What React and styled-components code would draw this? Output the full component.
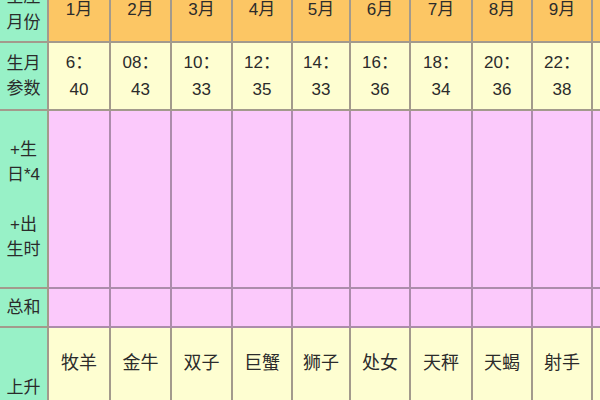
import React from 'react'
import styled, { createGlobalStyle } from 'styled-components'

const GlobalStyle = createGlobalStyle`
  html, body {
    margin: 0;
    padding: 0;
    width: 600px;
    height: 400px;
    overflow: hidden;
    background: #ffffff;
  }
`

const colors = {
  green: '#98f1c7',
  orange: '#fcc664',
  cream: '#fefed1',
  pink: '#fbc9fb',
  line: '#a39a8c',
  pinkLine: '#ac8cab',
}

const months = ['1月', '2月', '3月', '4月', '5月', '6月', '7月', '8月', '9月']
const params = [
  ['6：', '40'],
  ['08：', '43'],
  ['10：', '33'],
  ['12：', '35'],
  ['14：', '33'],
  ['16：', '36'],
  ['18：', '34'],
  ['20：', '36'],
  ['22：', '38'],
]
const signs = ['牧羊', '金牛', '双子', '巨蟹', '狮子', '处女', '天秤', '天蝎', '射手']

const Wrap = styled.div`
  width: 600px;
  height: 400px;
  overflow: hidden;
  font-family: 'Liberation Sans', 'Noto Sans CJK SC', sans-serif;
  color: #2b2b2b;
`

const Table = styled.div`
  display: grid;
  grid-template-columns: 49px 62px 61px 61px 60px 58px 60px 62px 60px 60px 62px;
  grid-template-rows: 64px 68px 178px 39px 90px;
  margin-top: -21px;
`

const Cell = styled.div`
  background: ${(p) => p.$bg};
  border-right: 2px solid ${(p) => p.$line || colors.line};
  border-bottom: 2px solid ${(p) => p.$line || colors.line};
  display: flex;
  flex-direction: column;
  align-items: center;
  justify-content: ${(p) => (p.$top ? 'flex-start' : 'center')};
  padding-top: ${(p) => p.$top || 0}px;
  text-align: center;
  font-size: 16px;
  line-height: ${(p) => p.$lh || 26}px;
  white-space: nowrap;
`

const Label = styled(Cell)`
  font-size: 17px;
  border-right-color: ${colors.line};
`

const Month = styled.span`
  font-size: 17px;
`

const Num = styled.span`
  display: block;
  font-size: 17px;
`

const Sign = styled.span`
  font-size: 18px;
`

// the 10th column is only a sliver at the right edge
const Sliver = ({ bg, line }) => <Cell $bg={bg} $line={line} />

function App() {
  return (
    <Wrap>
      <GlobalStyle />
      <Table>
        <Label $bg={colors.green}>
          <span>星座</span>
          <span>月份</span>
        </Label>
        {months.map((m) => (
          <Cell key={m} $bg={colors.orange}>
            <Month>{m}</Month>
          </Cell>
        ))}
        <Sliver bg={colors.orange} />

        <Label $bg={colors.green} $lh={25}>
          <span>生月</span>
          <span>参数</span>
        </Label>
        {params.map(([a, b], i) => (
          <Cell key={i} $bg={colors.cream} $lh={27}>
            <Num>{a}</Num>
            <Num>{b}</Num>
          </Cell>
        ))}
        <Sliver bg={colors.cream} />

        <Label $bg={colors.green} $lh={25}>
          <span>+生</span>
          <span>日*4</span>
          <span>&nbsp;</span>
          <span>+出</span>
          <span>生时</span>
        </Label>
        {months.map((m) => (
          <Cell key={m} $bg={colors.pink} $line={colors.pinkLine} />
        ))}
        <Sliver bg={colors.pink} line={colors.pinkLine} />

        <Label $bg={colors.green}>
          <span>总和</span>
        </Label>
        {months.map((m) => (
          <Cell key={m} $bg={colors.pink} $line={colors.pinkLine} />
        ))}
        <Sliver bg={colors.pink} line={colors.pinkLine} />

        <Label $bg={colors.green} $top={47}>
          <span>上升</span>
          <span>星座</span>
        </Label>
        {signs.map((s) => (
          <Cell key={s} $bg={colors.cream} $top={22}>
            <Sign>{s}</Sign>
          </Cell>
        ))}
        <Sliver bg={colors.cream} />
      </Table>
    </Wrap>
  )
}

export default App
